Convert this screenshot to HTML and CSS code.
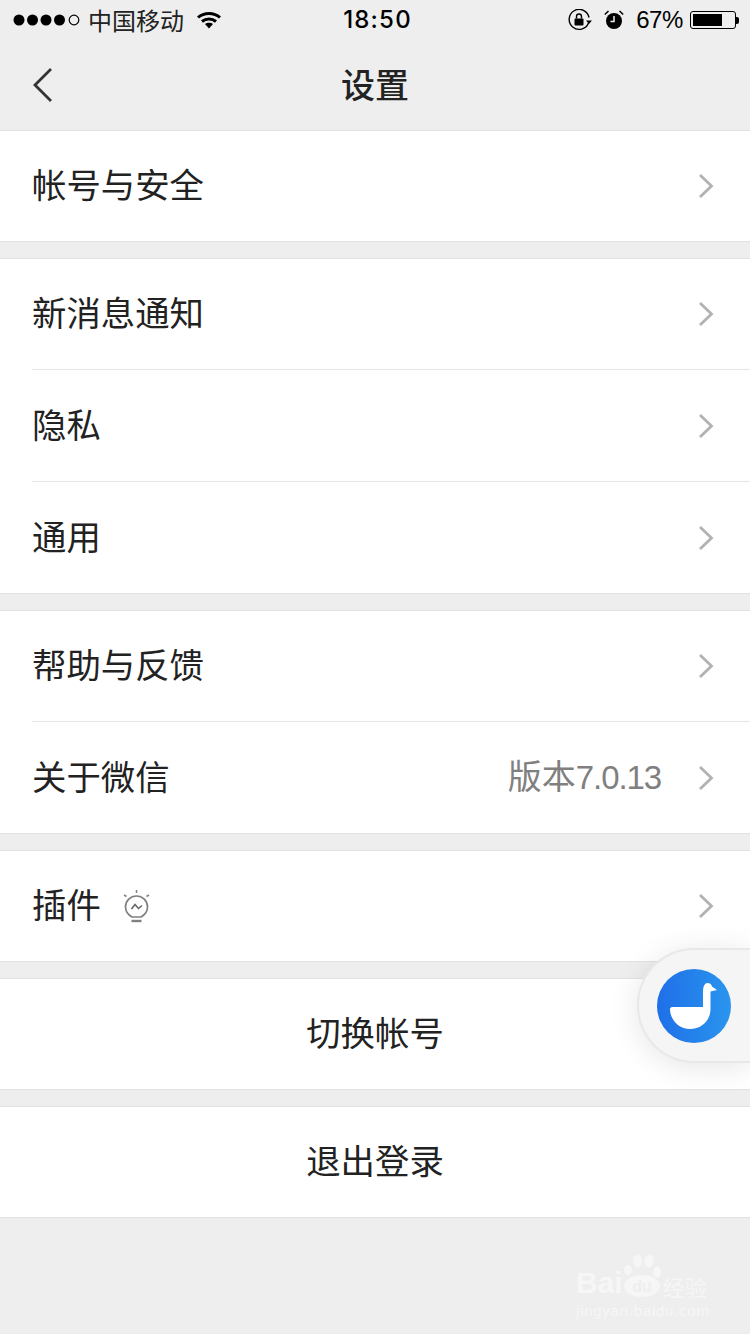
FILE: index.html
```html
<!DOCTYPE html>
<html lang="zh-CN">
<head>
  <meta charset="UTF-8">
  <meta name="viewport" content="width=device-width, initial-scale=1.0">
  <title>设置</title>
  <link rel="stylesheet" href="styles.css">
</head>
<body>

<!-- Status bar -->
<div class="status-bar">
  <div class="status-left">
    <svg class="signal" width="68" height="14" viewBox="0 0 68 14">
      <circle cx="6" cy="7" r="5.5" fill="#000"/>
      <circle cx="19.500" cy="7" r="5.500" fill="#000"/>
      <circle cx="33" cy="7" r="5.500" fill="#000"/>
      <circle cx="46.500" cy="7" r="5.500" fill="#000"/>
      <circle cx="61" cy="7" r="4.800" fill="none" stroke="#000" stroke-width="1.200"/>
    </svg>
    <span class="carrier">中国移动</span>
    <svg class="wifi" width="24" height="18" viewBox="0 0 24 18">
      <path d="M1 6.500C7 1 17 1 23 6.500" fill="none" stroke="#000" stroke-width="3"/>
      <path d="M5 10.500C9 7 15 7 19 10.500" fill="none" stroke="#000" stroke-width="3"/>
      <path d="M8 13L12 17.500 16 13C14 11.300 10 11.300 8 13Z" fill="#000"/>
    </svg>
  </div>
  <div class="status-time">18:50</div>
  <div class="status-right">
    <svg class="lock" width="24" height="22" viewBox="0 0 24 22">
      <path d="M20.500 14A10 10 0 1 1 21 8.500" fill="none" stroke="#000" stroke-width="1.400"/>
      <path d="M18 11.500h6l-3 3.500z" fill="#000"/>
      <rect x="6.500" y="9.500" width="9" height="7" rx="1" fill="#000"/>
      <path d="M8.500 9.500V7.500a2.500 2.500 0 0 1 5 0V9.500" fill="none" stroke="#000" stroke-width="1.400"/>
    </svg>
    <svg class="alarm" width="20" height="20" viewBox="0 0 20 20">
      <circle cx="10" cy="11" r="8" fill="#000"/>
      <path d="M10 6v5.500H6.500" fill="none" stroke="#eee" stroke-width="1.500"/>
      <path d="M0.800 4.500L4.500 1M19.200 4.500L15.500 1" fill="none" stroke="#000" stroke-width="1.500"/>
    </svg>
    <span class="battery-text">67%</span>
    <div class="battery">
      <div class="battery-body"><div class="battery-level"></div></div>
      <div class="battery-tip"></div>
    </div>
  </div>
</div>

<!-- Nav bar -->
<div class="nav-bar">
  <svg class="nav-back" width="22" height="36" viewBox="0 0 22 36">
    <path d="M19 2L3 18 19 34" fill="none" stroke="#333" stroke-width="2.800"/>
  </svg>
  <div class="nav-title">设置</div>
</div>

<div class="group">
  <div class="row">
    <span class="row-label">帐号与安全</span>
    <svg class="arrow" width="16" height="26" viewBox="0 0 16 26"><path d="M2 2L13.500 13 2 24" fill="none" stroke="#b2b2b2" stroke-width="2.800"/></svg>
  </div>
</div>

<div class="group">
  <div class="row">
    <span class="row-label">新消息通知</span>
    <svg class="arrow" width="16" height="26" viewBox="0 0 16 26"><path d="M2 2L13.500 13 2 24" fill="none" stroke="#b2b2b2" stroke-width="2.800"/></svg>
  </div>
  <div class="row">
    <span class="row-label">隐私</span>
    <svg class="arrow" width="16" height="26" viewBox="0 0 16 26"><path d="M2 2L13.500 13 2 24" fill="none" stroke="#b2b2b2" stroke-width="2.800"/></svg>
  </div>
  <div class="row">
    <span class="row-label">通用</span>
    <svg class="arrow" width="16" height="26" viewBox="0 0 16 26"><path d="M2 2L13.500 13 2 24" fill="none" stroke="#b2b2b2" stroke-width="2.800"/></svg>
  </div>
</div>

<div class="group">
  <div class="row">
    <span class="row-label">帮助与反馈</span>
    <svg class="arrow" width="16" height="26" viewBox="0 0 16 26"><path d="M2 2L13.500 13 2 24" fill="none" stroke="#b2b2b2" stroke-width="2.800"/></svg>
  </div>
  <div class="row">
    <span class="row-label">关于微信</span>
    <span class="row-value">版本<span class="version">7.0.13</span></span>
    <svg class="arrow" width="16" height="26" viewBox="0 0 16 26"><path d="M2 2L13.500 13 2 24" fill="none" stroke="#b2b2b2" stroke-width="2.800"/></svg>
  </div>
</div>

<div class="group">
  <div class="row">
    <span class="row-label">插件</span>
    <svg class="bulb" width="30" height="34" viewBox="0 0 30 34">
      <path d="M10 28C6.500 26 3.500 22.500 3.500 18a11 11 0 0 1 22 0C25.500 22.500 22.500 26 19 28Z" fill="none" stroke="#808080" stroke-width="1.700"/>
      <path d="M9.500 20l3.500-4.500 3.500 4 3.500-3" fill="none" stroke="#666" stroke-width="1.600"/>
      <path d="M9.500 32h10" stroke="#808080" stroke-width="2.400"/>
      <path d="M14.500 1v3M2 6l2.500 1.500M27 6l-2.500 1.500" stroke="#808080" stroke-width="1.500"/>
    </svg>
    <svg class="arrow" width="16" height="26" viewBox="0 0 16 26"><path d="M2 2L13.500 13 2 24" fill="none" stroke="#b2b2b2" stroke-width="2.800"/></svg>
  </div>
</div>

<div class="group">
  <div class="row row-center"><span class="row-label">切换帐号</span></div>
</div>

<div class="group">
  <div class="row row-center"><span class="row-label">退出登录</span></div>
</div>

<!-- Floating window button -->
<div class="float-ball">
  <svg width="74" height="74" viewBox="0 0 74 74">
    <defs>
      <linearGradient id="ballBlue" x1="0" y1="0" x2="1" y2="0">
        <stop offset="0" stop-color="#1f6fe8"/>
        <stop offset="1" stop-color="#2a95ee"/>
      </linearGradient>
    </defs>
    <circle cx="37" cy="37" r="37" fill="url(#ballBlue)"/>
    <path d="M15 38H46V23C46 17 48 14 50.500 14C53 14 54.500 15.500 55 17.500L60 21L53.500 22.500V40C53.500 51 45 60 33 60C21 60 13 50 13 40C13 39 14 38 15 38Z" fill="#fff"/>
  </svg>
</div>

<!-- Watermark -->
<div class="watermark">
  <div class="wm-top">
    <span class="wm-bai">Bai</span>
    <svg class="wm-paw" width="38" height="46" viewBox="0 0 38 46">
      <ellipse cx="5" cy="18" rx="4" ry="5" fill="#f6f6f6"/>
      <ellipse cx="14.500" cy="9" rx="4.500" ry="6.500" fill="#f6f6f6"/>
      <ellipse cx="26" cy="9" rx="4.500" ry="6.500" fill="#f6f6f6"/>
      <ellipse cx="34" cy="20" rx="4" ry="5.500" fill="#f6f6f6"/>
      <ellipse cx="19" cy="34" rx="18" ry="11" fill="#f6f6f6"/>
      <text x="19" y="40" text-anchor="middle" class="wm-du">du</text>
    </svg>
    <span class="wm-cn">经验</span>
  </div>
  <div class="wm-url">jingyan.baidu.com</div>
</div>

</body>
</html>
```

FILE: styles.css
```css
body {
  font-family: "Noto Sans CJK SC", "Noto Sans", sans-serif;
  margin: 0;
  padding: 0;
  width: 750px;
  height: 1334px;
  overflow: hidden;
  position: relative;
  background-color: #eeeeee;
  color: #222;
}

/* Status bar */
.status-bar {
  height: 40px;
  display: flex;
  align-items: center;
  justify-content: space-between;
  padding: 0 11px 0 13px;
  color: #000;
  position: relative;
}

.status-left,
.status-right {
  display: flex;
  align-items: center;
}

.carrier {
  font-size: 24px;
  line-height: 40px;
  margin-left: 7px;
  color: #222;
}

.wifi {
  margin-left: 13px;
}

.status-time {
  position: absolute;
  left: 5px;
  right: 0;
  text-align: center;
  font-family: Inter, sans-serif;
  font-size: 24px;
  font-weight: 500;
  letter-spacing: 1.200px;
  line-height: 40px;
}

.lock {
  margin-right: 12px;
}

.alarm {
  margin-right: 12px;
}

.battery-text {
  font-family: "Liberation Sans", sans-serif;
  font-size: 24px;
  letter-spacing: -0.400px;
  margin-right: 7px;
}

.battery {
  display: flex;
  align-items: center;
}

.battery-body {
  width: 46px;
  height: 18px;
  box-sizing: border-box;
  padding: 2px;
  border: 1.500px solid #000;
  border-radius: 3px;
}

.battery-level {
  width: 29px;
  height: 100%;
  background-color: #000;
}

.battery-tip {
  width: 3px;
  height: 7px;
  background-color: #000;
  border-radius: 0 2px 2px 0;
}

/* Nav bar */
.nav-bar {
  height: 90px;
  box-sizing: border-box;
  padding-bottom: 4px;
  display: flex;
  align-items: center;
  justify-content: center;
  position: relative;
}

.nav-back {
  position: absolute;
  left: 32px;
  top: 27px;
}

.nav-title {
  font-size: 34px;
  font-weight: 500;
  color: #222;
}

/* List */
.group {
  background-color: #fff;
  border-top: 1px solid #e2e2e2;
  border-bottom: 1px solid #e2e2e2;
  margin-bottom: 16px;
}

.row {
  height: 111px;
  margin-left: 32px;
  padding-right: 36px;
  display: flex;
  align-items: center;
  border-top: 1px solid #e5e5e5;
}

.row:first-child {
  height: 110px;
  border-top: none;
}

.row-label {
  font-size: 34.400px;
  padding-bottom: 6px;
  color: #222;
}

.row-value {
  font-size: 34px;
  padding-bottom: 6px;
  color: #808080;
  margin-left: auto;
  margin-right: 36px;
}

.version {
  font-family: "Liberation Sans", sans-serif;
  font-size: 33px;
  letter-spacing: -1.100px;
  margin-right: 1px;
}

.arrow {
  margin-left: auto;
}

.row-value + .arrow {
  margin-left: 0;
}

.bulb {
  margin-left: 21px;
}

.row-center {
  justify-content: center;
  margin-left: 0;
  padding-right: 0;
}

/* Floating window button */
.float-ball {
  position: absolute;
  right: 0;
  top: 948px;
  width: 113px;
  height: 115px;
  box-sizing: border-box;
  background-color: #f5f5f5;
  border: 2px solid #e8e8e8;
  border-right: none;
  border-radius: 57px 0 0 57px;
  box-shadow: 0 4px 30px rgba(0, 0, 0, 0.1);
  padding: 19px 0 0 18px;
}

/* Watermark */
.watermark {
  position: absolute;
  left: 576px;
  top: 1252px;
  color: #f6f6f6;
}

.wm-top {
  display: flex;
  align-items: flex-end;
  height: 50px;
}

.wm-bai {
  font-family: "Liberation Sans", sans-serif;
  font-size: 30px;
  font-weight: 700;
  line-height: 38px;
}

.wm-paw {
  margin: 0 2px 4px 0;
}

.wm-du {
  font-family: "Liberation Sans", sans-serif;
  font-size: 16px;
  font-weight: 700;
  fill: #eeeeee;
}

.wm-cn {
  font-size: 22px;
  line-height: 32px;
}

.wm-url {
  font-family: "Liberation Sans", sans-serif;
  font-size: 15px;
  letter-spacing: 0.750px;
  line-height: 18px;
}
```
